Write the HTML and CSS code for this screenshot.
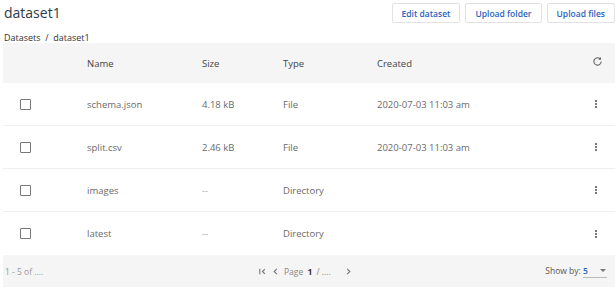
FILE: index.html
```html
<!DOCTYPE html>
<html lang="en">
<head>
  <meta charset="UTF-8">
  <title>dataset1</title>
  <link rel="stylesheet" href="styles.css">
</head>
<body>
  <div class="top">
    <h1>dataset1</h1>
    <div class="actions">
      <button class="btn">Edit dataset</button>
      <button class="btn">Upload folder</button>
      <button class="btn">Upload files</button>
    </div>
  </div>
  <div class="crumbs">Datasets &nbsp;/&nbsp; dataset1</div>

  <table class="files">
    <colgroup>
      <col class="c-check"><col class="c-name"><col class="c-size"><col class="c-type"><col class="c-created"><col class="c-menu">
    </colgroup>
    <thead>
      <tr>
        <th></th>
        <th>Name</th>
        <th>Size</th>
        <th>Type</th>
        <th>Created</th>
        <th class="menu">
          <svg width="11" height="11" viewBox="0 0 24 24" fill="none" stroke="#666" stroke-width="2.4"><path d="M20 12a8 8 0 1 1-2.3-5.7"/><path d="M18.5 3v4h-4"/></svg>
        </th>
      </tr>
    </thead>
    <tbody>
      <tr>
        <td><span class="check"></span></td>
        <td>schema.json</td>
        <td>4.18 kB</td>
        <td>File</td>
        <td>2020-07-03 11:03 am</td>
        <td class="menu"><span class="kebab"></span></td>
      </tr>
      <tr>
        <td><span class="check"></span></td>
        <td>split.csv</td>
        <td>2.46 kB</td>
        <td>File</td>
        <td>2020-07-03 11:03 am</td>
        <td class="menu"><span class="kebab"></span></td>
      </tr>
      <tr>
        <td><span class="check"></span></td>
        <td>images</td>
        <td class="dash">--</td>
        <td>Directory</td>
        <td></td>
        <td class="menu"><span class="kebab"></span></td>
      </tr>
      <tr>
        <td><span class="check"></span></td>
        <td>latest</td>
        <td class="dash">--</td>
        <td>Directory</td>
        <td></td>
        <td class="menu"><span class="kebab"></span></td>
      </tr>
    </tbody>
  </table>

  <div class="footer">
    <div class="count">1 - 5 of ....</div>
    <div class="pager">
      <svg width="9" height="9" viewBox="0 0 10 10" fill="none" stroke="#777" stroke-width="1.2"><path d="M2 2v6M7.5 2.5L5 5l2.5 2.5"/></svg>
      <svg width="9" height="9" viewBox="0 0 10 10" fill="none" stroke="#777" stroke-width="1.2"><path d="M6.5 2L3.5 5l3 3"/></svg>
      <span>Page <b>1</b> / ....</span>
      <svg width="9" height="9" viewBox="0 0 10 10" fill="none" stroke="#777" stroke-width="1.2"><path d="M3.5 2l3 3-3 3"/></svg>
    </div>
    <div class="showby">Show by: <span class="select"><b>5</b><i class="caret"></i></span></div>
  </div>
</body>
</html>
```

FILE: styles.css
```css
body {
  margin: 0;
  padding: 0 0 0 3px;
  font-family: "Open Sans", "Noto Sans", sans-serif;
  color: #555;
  background: #fff;
}
.top {
  display: flex;
  justify-content: space-between;
  align-items: center;
  height: 25px;
  width: 612px;
}
h1 {
  margin: 0 0 0 1px;
  font-size: 14px;
  font-weight: 400;
  color: #2e3a48;
}
.actions {
  display: flex;
  gap: 5px;
  padding-top: 1px;
}
.btn {
  height: 20px;
  padding: 0 9px;
  background: #fff;
  border: 1px solid #e2e2e2;
  border-radius: 2px;
  color: #2a62c0;
  font-family: "Open Sans", "Noto Sans", sans-serif;
  font-size: 8.5px;
  font-weight: 600;
}
.crumbs {
  margin: 6px 0 0 1px;
  font-size: 9px;
  color: #333;
  height: 12px;
}
.files {
  width: 612px;
  border-collapse: collapse;
  table-layout: fixed;
  font-size: 9.5px;
}
.c-check { width: 84px; }
.c-name { width: 115px; }
.c-size { width: 81px; }
.c-type { width: 94px; }
.c-menu { width: 40px; }
.files th {
  height: 40px;
  padding: 0;
  background: #f5f5f5;
  font-weight: 400;
  text-align: left;
  color: #444;
}
.files td {
  height: 42px;
  padding: 0;
  border-bottom: 1px solid #f0f0f0;
  color: #6a6a6a;
}
.files tr:last-child td {
  height: 43px;
  border-bottom: none;
}
.menu {
  text-align: left;
  padding-left: 17px !important;
}
.dash {
  color: #aaa !important;
}
.check {
  display: block;
  width: 9px;
  height: 9px;
  margin-left: 17px;
  border: 1px solid #777;
  border-radius: 1px;
}
.kebab {
  display: block;
  width: 2px;
  height: 2px;
  margin-left: 3px;
  background: #777;
  box-shadow: 0 -3px 0 #777, 0 3px 0 #777;
}
.footer {
  display: flex;
  align-items: center;
  height: 32px;
  width: 612px;
  background: #f5f5f5;
  font-size: 8.5px;
  color: #888;
}
.count {
  width: 253px;
  padding-left: 2px;
  color: #999;
}
.pager {
  display: flex;
  align-items: center;
  gap: 4px;
  color: #888;
}
.pager span {
  margin: 0 9px 0 0;
}
.pager b {
  color: #333;
  margin: 0 2px;
}
.showby {
  margin-left: auto;
  margin-right: 8px;
  color: #555;
}
.select {
  display: inline-flex;
  align-items: center;
  gap: 12px;
  width: 24px;
  border-bottom: 1px solid #bbb;
  padding-bottom: 1px;
}
.select b {
  color: #2a62c0;
  font-weight: 600;
}
.caret {
  width: 0;
  height: 0;
  border-left: 3px solid transparent;
  border-right: 3px solid transparent;
  border-top: 3px solid #777;
}
```
